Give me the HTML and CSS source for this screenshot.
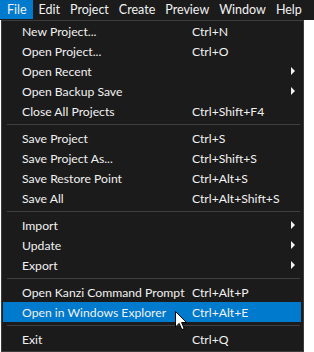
FILE: index.html
```html
<!DOCTYPE html>
<html lang="en">

<head>
    <meta charset="UTF-8" />
    <title>File menu</title>
    <link rel="stylesheet" href="styles.css">
</head>

<body>
    <div class="menubar">
        <span class="menubar-item active">File</span>
        <span class="menubar-item">Edit</span>
        <span class="menubar-item">Project</span>
        <span class="menubar-item">Create</span>
        <span class="menubar-item">Preview</span>
        <span class="menubar-item">Window</span>
        <span class="menubar-item">Help</span>
    </div>

    <div class="dropdown">
        <div class="item"><span class="label">New Project...</span><span class="shortcut">Ctrl+N</span></div>
        <div class="item"><span class="label">Open Project...</span><span class="shortcut">Ctrl+O</span></div>
        <div class="item"><span class="label">Open Recent</span><span class="shortcut"></span><span class="arrow"></span></div>
        <div class="item"><span class="label">Open Backup Save</span><span class="shortcut"></span><span class="arrow"></span></div>
        <div class="item"><span class="label">Close All Projects</span><span class="shortcut">Ctrl+Shift+F4</span></div>
        <div class="separator"></div>
        <div class="item"><span class="label">Save Project</span><span class="shortcut">Ctrl+S</span></div>
        <div class="item"><span class="label">Save Project As...</span><span class="shortcut">Ctrl+Shift+S</span></div>
        <div class="item"><span class="label">Save Restore Point</span><span class="shortcut">Ctrl+Alt+S</span></div>
        <div class="item"><span class="label">Save All</span><span class="shortcut">Ctrl+Alt+Shift+S</span></div>
        <div class="separator"></div>
        <div class="item"><span class="label">Import</span><span class="shortcut"></span><span class="arrow"></span></div>
        <div class="item"><span class="label">Update</span><span class="shortcut"></span><span class="arrow"></span></div>
        <div class="item"><span class="label">Export</span><span class="shortcut"></span><span class="arrow"></span></div>
        <div class="separator"></div>
        <div class="item"><span class="label">Open Kanzi Command Prompt</span><span class="shortcut">Ctrl+Alt+P</span></div>
        <div class="item hover"><span class="label">Open in Windows Explorer</span><span class="shortcut">Ctrl+Alt+E</span>
            <!-- mouse pointer -->
            <svg class="cursor" width="13" height="20" viewBox="0 0 13 20">
                <path d="M0.5 0.5 L0.5 16 L4.2 12.4 L6.8 18.6 L9.2 17.6 L6.6 11.5 L11.6 11.5 Z" fill="#fff" stroke="#000" stroke-width="1" stroke-linejoin="miter" />
            </svg>
        </div>
        <div class="separator"></div>
        <div class="item"><span class="label">Exit</span><span class="shortcut">Ctrl+Q</span></div>
    </div>
</body>

</html>
```

FILE: styles.css
```css
body {
    margin: 0;
    background: #ffffff;
    font-family: "Lato", "Noto Sans", sans-serif;
    font-size: 12.2px;
    color: #f1f1f1;
}

.menubar {
    display: flex;
    height: 20px;
    background: #1b1b1b;
    font-size: 12.5px;
}

.menubar-item {
    padding: 0 5px;
    line-height: 19px;
    height: 19px;
}

.menubar-item.active {
    background: #007acc;
    padding: 0 6px 0 7px;
    margin-right: 1px;
}

.dropdown {
    margin-left: 1px;
    width: 303px;
    box-sizing: border-box;
    background: #1b1b1b;
    border: 1px solid #3c3c3c;
    padding: 0 2px 1px 0;
    height: 332px;
}

.item {
    position: relative;
    display: flex;
    align-items: center;
    height: 20px;
    padding-left: 19px;
    margin-left: 1px;
}

.item.hover {
    background: #007acc;
}

.label {
    width: 170px;
    white-space: nowrap;
}

.shortcut {
    flex: 1;
    white-space: nowrap;
}

.arrow {
    width: 0;
    height: 0;
    margin-right: 6px;
    border-top: 4px solid transparent;
    border-bottom: 4px solid transparent;
    border-left: 4px solid #f1f1f1;
}

.separator {
    height: 1px;
    background: #3f3f3f;
    margin: 3px 1px 3px 5px;
}

.cursor {
    position: absolute;
    left: 172px;
    top: 9px;
}
```
